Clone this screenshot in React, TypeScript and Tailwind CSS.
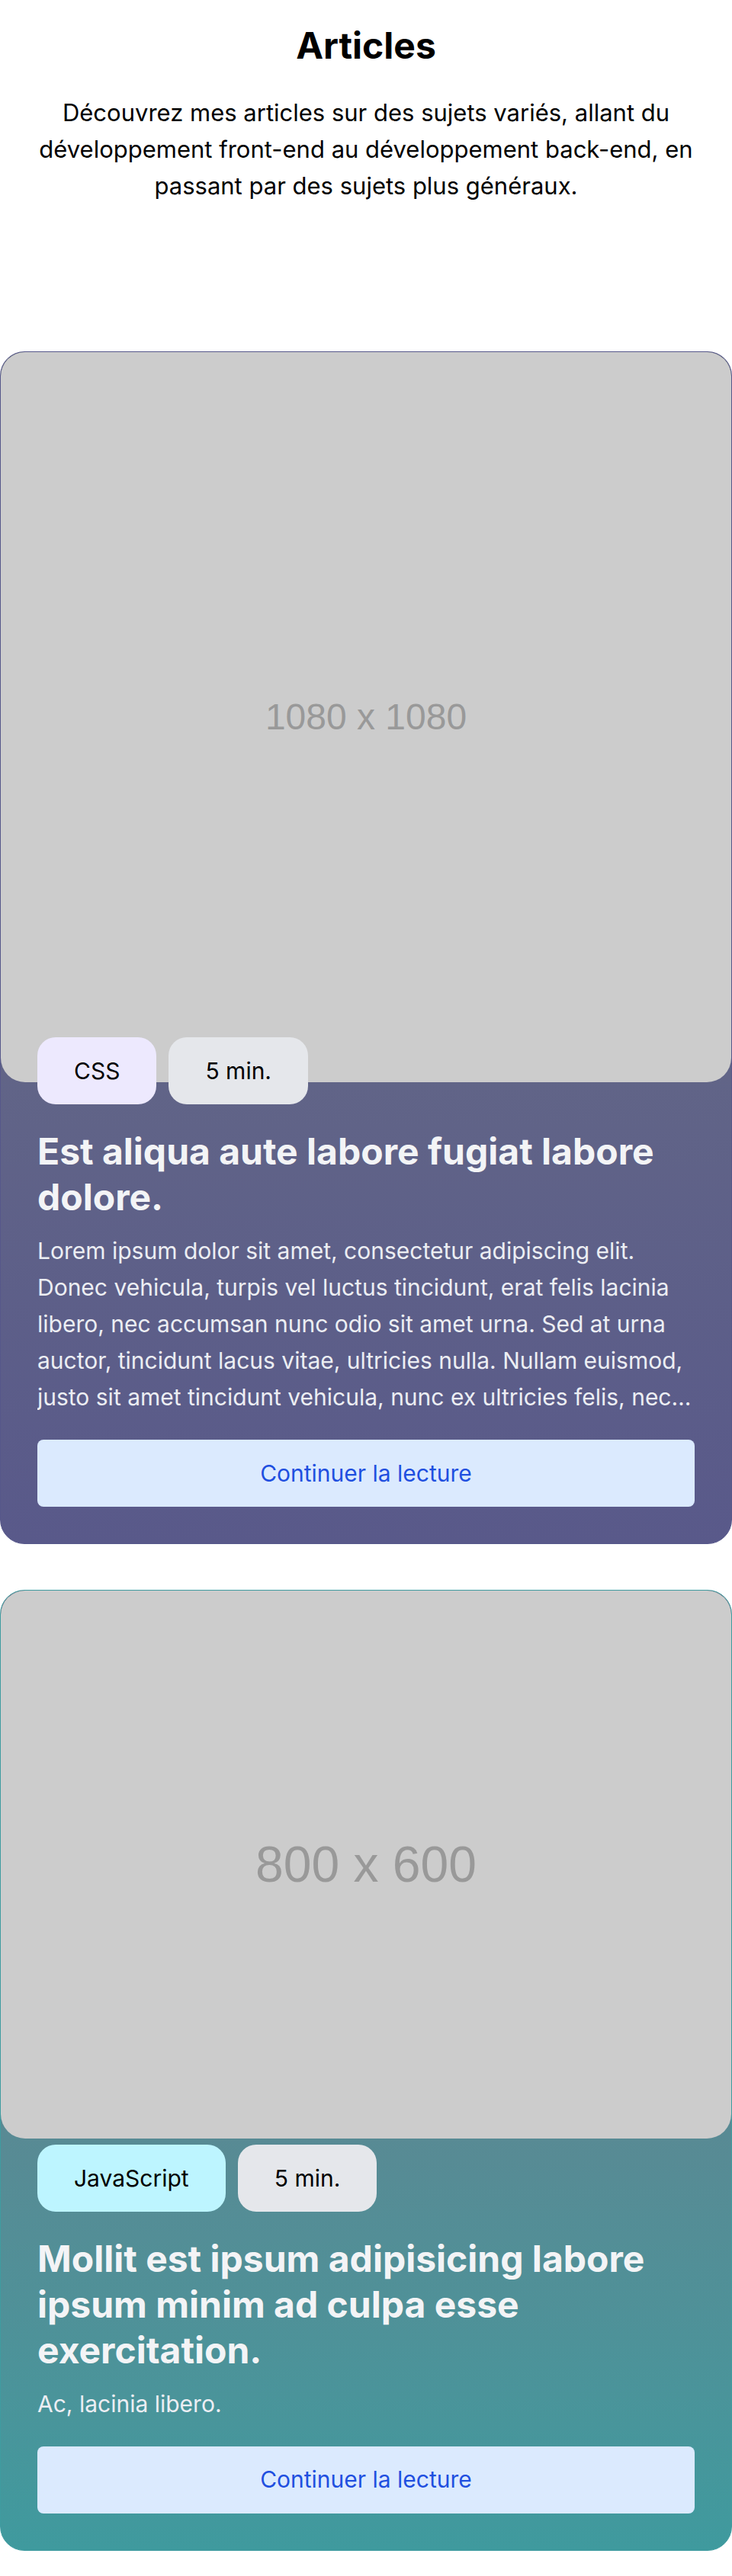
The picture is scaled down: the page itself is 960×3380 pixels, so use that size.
type Article = {
  image: string;
  imageText: string;
  ratio: string;
  tag: string;
  tagClass: string;
  tagsOffset: string;
  title: string;
  excerpt: string;
  cardClass: string;
};

const articles: Article[] = [
  {
    image: '1080 x 1080',
    imageText: 'text-[48px]',
    ratio: 'aspect-square',
    tag: 'CSS',
    tagClass: 'bg-[#ede9fe]',
    tagsOffset: '-mt-[59px]',
    title: 'Est aliqua aute labore fugiat labore dolore.',
    excerpt:
      'Lorem ipsum dolor sit amet, consectetur adipiscing elit. Donec vehicula, turpis vel luctus tincidunt, erat felis lacinia libero, nec accumsan nunc odio sit amet urna. Sed at urna auctor, tincidunt lacus vitae, ultricies nulla. Nullam euismod, justo sit amet tincidunt vehicula, nunc ex ultricies felis, nec facilisis mauris magna vel nisi. Integer posuere erat a ante venenatis dapibus.',
    cardClass: 'border-[#56578a] from-[#6e7582] to-[#59598a]',
  },
  {
    image: '800 x 600',
    imageText: 'text-[66px]',
    ratio: 'aspect-[4/3]',
    tag: 'JavaScript',
    tagClass: 'bg-[#bdf5ff]',
    tagsOffset: 'mt-2',
    title: 'Mollit est ipsum adipisicing labore ipsum minim ad culpa esse exercitation.',
    excerpt: 'Ac, lacinia libero.',
    cardClass: 'border-[#3f9ca0] from-[#6b7587] to-[#3f9a9e]',
  },
];

function ArticleCard({ article }: { article: Article }) {
  return (
    <article
      className={`overflow-hidden rounded-[32px] border bg-linear-to-b ${article.cardClass}`}
    >
      {/* Placeholder image */}
      <div
        className={`flex ${article.ratio} items-center justify-center rounded-[32px] bg-[#cccccc] font-['Liberation_Sans',Arial,sans-serif] ${article.imageText} text-[#999999]`}
      >
        {article.image}
      </div>

      <div className="px-12 pb-12">
        {/* Tags */}
        <div className={`relative flex gap-4 ${article.tagsOffset}`}>
          <span
            className={`rounded-[24px] px-12 py-5 text-[30px] leading-[48px] text-black ${article.tagClass}`}
          >
            {article.tag}
          </span>
          <span className="rounded-[24px] bg-[#e5e7eb] px-12 py-5 text-[30px] leading-[48px] text-black">
            5 min.
          </span>
        </div>

        <h2 className="mt-8 text-[48px] leading-[60px] font-bold text-[#f3f4f6]">
          {article.title}
        </h2>
        <p className="mt-4 line-clamp-5 h-auto text-[30px] leading-[48px] text-[#eceef3]">
          {article.excerpt}
        </p>

        <button className="mt-8 flex h-[88px] w-full items-center justify-center rounded-lg bg-[#dbeafe] text-[30px] text-[#1f4fe0]">
          Continuer la lecture
        </button>
      </div>
    </article>
  );
}

export default function App() {
  return (
    <div className="min-h-[3380px] bg-white font-['Inter','Noto_Sans',sans-serif] text-black">
      <header className="px-12 pt-7 text-center">
        <h1 className="text-[48px] leading-[64px] font-bold">Articles</h1>
        <p className="mt-8 text-[31px] leading-[48px]">
          Découvrez mes articles sur des sujets variés, allant du développement front-end au
          développement back-end, en passant par des sujets plus généraux.
        </p>
      </header>

      <section className="mt-[193px] flex flex-col gap-[60px]">
        {articles.map((article) => (
          <ArticleCard key={article.title} article={article} />
        ))}
      </section>
    </div>
  );
}
